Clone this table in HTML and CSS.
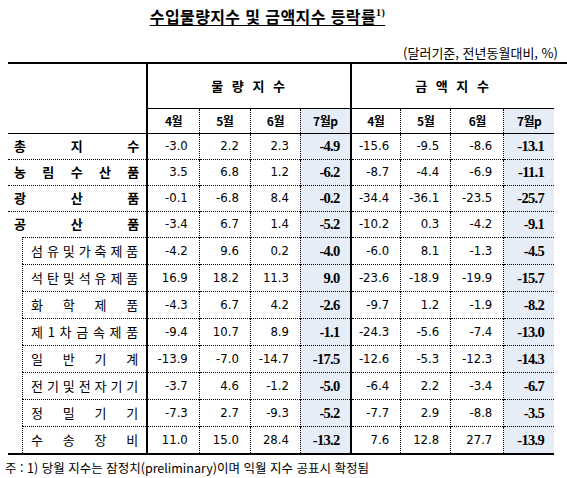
FILE: index.html
```html
<!DOCTYPE html>
<html lang="ko">
<head>
  <meta charset="UTF-8">
  <title>수입물량지수 및 금액지수 등락률</title>
  <link rel="stylesheet" href="styles.css">
</head>
<body>
  <div class="page">
    <h1 class="title"><span class="title-text">수입물량지수 및 금액지수 등락률<sup>1)</sup></span></h1>
    <p class="unit">(달러기준, 전년동월대비, %)</p>

    <div class="table-wrap">
      <table class="stats">
        <colgroup>
          <col class="c-label">
          <col class="c52"><col class="c51"><col class="c50"><col class="c50">
          <col class="c50"><col class="c50"><col class="c53"><col class="c50">
        </colgroup>
        <thead>
          <tr class="group-row">
            <th rowspan="2" class="corner"></th>
            <th colspan="4" class="group">물 량 지 수</th>
            <th colspan="4" class="group">금 액 지 수</th>
          </tr>
          <tr class="month-row">
            <th class="first">4월</th><th>5월</th><th>6월</th><th class="hl">7월p</th>
            <th class="first">4월</th><th>5월</th><th>6월</th><th class="hl">7월p</th>
          </tr>
        </thead>
        <tbody>
          <tr class="main">
            <td class="label"><div class="spread"><span>총</span><span>지</span><span>수</span></div></td>
            <td class="first">-3.0</td><td>2.2</td><td>2.3</td><td class="hl">-4.9</td>
            <td class="first">-15.6</td><td>-9.5</td><td>-8.6</td><td class="hl">-13.1</td>
          </tr>
          <tr class="main">
            <td class="label"><div class="spread"><span>농</span><span>림</span><span>수</span><span>산</span><span>품</span></div></td>
            <td class="first">3.5</td><td>6.8</td><td>1.2</td><td class="hl">-6.2</td>
            <td class="first">-8.7</td><td>-4.4</td><td>-6.9</td><td class="hl">-11.1</td>
          </tr>
          <tr class="main">
            <td class="label"><div class="spread"><span>광</span><span>산</span><span>품</span></div></td>
            <td class="first">-0.1</td><td>-6.8</td><td>8.4</td><td class="hl">-0.2</td>
            <td class="first">-34.4</td><td>-36.1</td><td>-23.5</td><td class="hl">-25.7</td>
          </tr>
          <tr class="main">
            <td class="label"><div class="spread"><span>공</span><span>산</span><span>품</span></div></td>
            <td class="first">-3.4</td><td>6.7</td><td>1.4</td><td class="hl">-5.2</td>
            <td class="first">-10.2</td><td>0.3</td><td>-4.2</td><td class="hl">-9.1</td>
          </tr>
          <tr class="sub">
            <td class="label"><div class="spread"><span>섬</span><span>유</span><span>및</span><span>가</span><span>축</span><span>제</span><span>품</span></div></td>
            <td class="first">-4.2</td><td>9.6</td><td>0.2</td><td class="hl">-4.0</td>
            <td class="first">-6.0</td><td>8.1</td><td>-1.3</td><td class="hl">-4.5</td>
          </tr>
          <tr class="sub">
            <td class="label"><div class="spread"><span>석</span><span>탄</span><span>및</span><span>석</span><span>유</span><span>제</span><span>품</span></div></td>
            <td class="first">16.9</td><td>18.2</td><td>11.3</td><td class="hl">9.0</td>
            <td class="first">-23.6</td><td>-18.9</td><td>-19.9</td><td class="hl">-15.7</td>
          </tr>
          <tr class="sub">
            <td class="label"><div class="spread"><span>화</span><span>학</span><span>제</span><span>품</span></div></td>
            <td class="first">-4.3</td><td>6.7</td><td>4.2</td><td class="hl">-2.6</td>
            <td class="first">-9.7</td><td>1.2</td><td>-1.9</td><td class="hl">-8.2</td>
          </tr>
          <tr class="sub">
            <td class="label"><div class="spread"><span>제</span><span>1</span><span>차</span><span>금</span><span>속</span><span>제</span><span>품</span></div></td>
            <td class="first">-9.4</td><td>10.7</td><td>8.9</td><td class="hl">-1.1</td>
            <td class="first">-24.3</td><td>-5.6</td><td>-7.4</td><td class="hl">-13.0</td>
          </tr>
          <tr class="sub">
            <td class="label"><div class="spread"><span>일</span><span>반</span><span>기</span><span>계</span></div></td>
            <td class="first">-13.9</td><td>-7.0</td><td>-14.7</td><td class="hl">-17.5</td>
            <td class="first">-12.6</td><td>-5.3</td><td>-12.3</td><td class="hl">-14.3</td>
          </tr>
          <tr class="sub">
            <td class="label"><div class="spread"><span>전</span><span>기</span><span>및</span><span>전</span><span>자</span><span>기</span><span>기</span></div></td>
            <td class="first">-3.7</td><td>4.6</td><td>-1.2</td><td class="hl">-5.0</td>
            <td class="first">-6.4</td><td>2.2</td><td>-3.4</td><td class="hl">-6.7</td>
          </tr>
          <tr class="sub">
            <td class="label"><div class="spread"><span>정</span><span>밀</span><span>기</span><span>기</span></div></td>
            <td class="first">-7.3</td><td>2.7</td><td>-9.3</td><td class="hl">-5.2</td>
            <td class="first">-7.7</td><td>2.9</td><td>-8.8</td><td class="hl">-3.5</td>
          </tr>
          <tr class="sub">
            <td class="label"><div class="spread"><span>수</span><span>송</span><span>장</span><span>비</span></div></td>
            <td class="first">11.0</td><td>15.0</td><td>28.4</td><td class="hl">-13.2</td>
            <td class="first">7.6</td><td>12.8</td><td>27.7</td><td class="hl">-13.9</td>
          </tr>
        </tbody>
      </table>
    </div>

    <p class="note">주 : 1) 당월 지수는 잠정치(preliminary)이며 익월 지수 공표시 확정됨</p>
  </div>
</body>
</html>
```

FILE: styles.css
```css
* {
  box-sizing: border-box;
  margin: 0;
  padding: 0;
}

body {
  background: #fff;
  color: #000;
  font-family: "Noto Sans CJK KR", "Noto Sans", sans-serif;
}

.page {
  width: 567px;
  padding: 6px 0 0 8px;
}

/* title + unit */
.title {
  width: 545px;
  text-align: center;
  font-size: 16px;
  font-weight: 700;
  line-height: 20px;
  height: 20px;
  padding-right: 26px;
  letter-spacing: 0.4px;
}

.title-text {
  text-decoration: underline;
  text-underline-offset: 2px;
}

.title sup {
  font-family: "Liberation Serif", serif;
  font-size: 10px;
  vertical-align: 7px;
  line-height: 0;
}

.unit {
  width: 550px;
  margin-top: 18px;
  text-align: right;
  font-size: 13px;
  line-height: 17px;
  height: 18px;
  white-space: nowrap;
}

/* table */
.table-wrap {
  border-top: 2px solid #000;
  width: 559px;
}

.stats {
  width: 546px;
  table-layout: fixed;
  border-collapse: collapse;
  border-bottom: 2px solid #000;
}

.c-label { width: 139px; }
.c50 { width: 50px; }
.c51 { width: 51px; }
.c52 { width: 52px; }
.c53 { width: 53px; }

.stats th {
  font-weight: 700;
  font-size: 13px;
  text-align: center;
}

.group-row { height: 44px; }

.group {
  border-left: 2px solid #000;
  border-bottom: 1px solid #000;
  letter-spacing: 1.5px;
  word-spacing: 2px;
}

.corner {
  border-bottom: 1px solid #000;
}

.month-row { height: 25px; }

.month-row th {
  border-left: 1px dotted #000;
  border-bottom: 1px solid #000;
  font-size: 12px;
  letter-spacing: -0.5px;
}

.month-row th.first {
  border-left: 2px solid #000;
}

.hl {
  background: #e6edf6;
}

.stats td {
  border-left: 1px dotted #000;
  border-top: 1px dotted #000;
  text-align: right;
  padding-right: 11px;
  font-family: "Liberation Sans Narrow", "DejaVu Sans Condensed", sans-serif;
  font-size: 13px;
  line-height: 14px;
}

.stats td.first {
  border-left: 2px solid #000;
}

.stats td.hl {
  font-family: "Liberation Serif", serif;
  font-weight: 700;
  font-size: 14.5px;
  letter-spacing: -0.7px;
  padding-right: 10px;
}

.main { height: 26px; }
.sub { height: 27px; }

.stats tr:first-child td {
  border-top: none;
}

/* row labels */
.stats td.label {
  text-align: left;
  padding: 0;
  border-left: none;
  font-family: "Noto Sans CJK KR", sans-serif;
}

.spread {
  display: flex;
  justify-content: space-between;
  align-items: center;
}

.main .spread {
  padding: 0 7px 0 6px;
  font-weight: 700;
  font-size: 13px;
}

.stats .sub td.label {
  border-top: none;
  padding-left: 14px;
  height: 27px;
}

.sub .spread {
  height: 27px;
  border-left: 1px dotted #000;
  border-top: 1px dotted #000;
  padding: 0 8px 0 8px;
  font-size: 13px;
}

.note {
  margin-top: 5px;
  margin-left: -3px;
  font-size: 12.5px;
  line-height: 16px;
}
```
